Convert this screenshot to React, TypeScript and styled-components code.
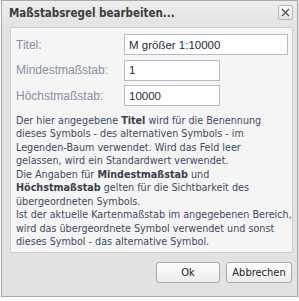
import styled, { createGlobalStyle } from 'styled-components'

const GlobalStyle = createGlobalStyle`
  html, body {
    margin: 0;
    padding: 0;
    background: #ffffff;
  }
`

const Window = styled.div`
  box-sizing: border-box;
  width: 297px;
  height: 297px;
  margin: 0 0 0 1px;
  border: 1px solid #a9a9a9;
  background: #e2e2e2;
  box-shadow: 1px 1px 2px rgba(0, 0, 0, 0.2);
  display: flex;
  flex-direction: column;
  font-family: 'DejaVu Sans Condensed', 'DejaVu Sans', sans-serif;
`

const TitleBar = styled.div`
  height: 24px;
  display: flex;
  align-items: center;
  justify-content: space-between;
  padding: 0 4px 0 7px;
  background: linear-gradient(#ededed, #e4e4e4);
`

const Title = styled.span`
  font-size: 11.5px;
  font-weight: bold;
  color: #3c3c3c;
  margin-top: -1px;
`

const CloseButton = styled.button`
  box-sizing: border-box;
  width: 15px;
  height: 15px;
  padding: 0;
  margin-top: -1px;
  border: 1px solid #b4b4b4;
  border-radius: 2px;
  background: linear-gradient(#fbfbfb, #e6e6e6);
  display: flex;
  align-items: center;
  justify-content: center;
`

const Body = styled.div`
  flex: 1;
  display: flex;
  flex-direction: column;
  padding: 2px 4px 0 8px;
`

const Panel = styled.div`
  box-sizing: border-box;
  height: 226px;
  border: 1px solid #d0d0d0;
  background: #f5f5f5;
  padding: 4px 4px 0 5px;
`

const FieldRow = styled.div`
  display: flex;
  align-items: center;
  height: 25.5px;
`

const Label = styled.label`
  width: 108px;
  font-family: 'Liberation Sans', Arial, sans-serif;
  font-size: 12px;
  color: #8790a6;
`

const Input = styled.input<{ $wide?: boolean }>`
  box-sizing: border-box;
  width: ${(p) => (p.$wide ? '164px' : '96px')};
  height: 21px;
  border: 1px solid #b9bcc8;
  background: #ffffff;
  padding: 0 4px;
  font-family: 'Liberation Sans', Arial, sans-serif;
  font-size: 11.5px;
  color: #2a2a3a;
  outline: none;
`

const Help = styled.p`
  margin: 5px 0 0;
  font-size: 10.7px;
  line-height: 13.5px;
  color: #3e4a64;
  white-space: nowrap;

  b {
    color: #3a3f50;
  }
`

const Footer = styled.div`
  display: flex;
  justify-content: flex-end;
  gap: 6px;
  padding: 9px 1px 0 0;
`

const Button = styled.button<{ $w: number }>`
  box-sizing: border-box;
  width: ${(p) => p.$w}px;
  height: 21px;
  border: 1px solid #a8a8a8;
  border-radius: 3px;
  background: linear-gradient(#fdfdfd, #ececec);
  font-family: 'DejaVu Sans Condensed', 'DejaVu Sans', sans-serif;
  font-size: 11px;
  color: #222;
  padding: 0;
`

export default function App() {
  return (
    <>
      <GlobalStyle />
      <Window>
        <TitleBar>
          <Title>Maßstabsregel bearbeiten...</Title>
          <CloseButton aria-label="Schließen">
            <svg width="9" height="9" viewBox="0 0 9 9">
              <path d="M1 1 L8 8 M8 1 L1 8" stroke="#505050" strokeWidth="1.3" />
            </svg>
          </CloseButton>
        </TitleBar>
        <Body>
          <Panel>
            <FieldRow>
              <Label>Titel:</Label>
              <Input $wide defaultValue="M größer 1:10000" />
            </FieldRow>
            <FieldRow>
              <Label>Mindestmaßstab:</Label>
              <Input defaultValue="1" />
            </FieldRow>
            <FieldRow>
              <Label>Höchstmaßstab:</Label>
              <Input defaultValue="10000" />
            </FieldRow>
            <Help>
              Der hier angegebene <b>Titel</b> wird für die Benennung
              <br />
              dieses Symbols - des alternativen Symbols - im
              <br />
              Legenden-Baum verwendet. Wird das Feld leer
              <br />
              gelassen, wird ein Standardwert verwendet.
              <br />
              Die Angaben für <b>Mindestmaßstab</b> und
              <br />
              <b>Höchstmaßstab</b> gelten für die Sichtbarkeit des
              <br />
              übergeordneten Symbols.
              <br />
              Ist der aktuelle Kartenmaßstab im angegebenen Bereich,
              <br />
              wird das übergeordnete Symbol verwendet und sonst
              <br />
              dieses Symbol - das alternative Symbol.
            </Help>
          </Panel>
          <Footer>
            <Button $w={64}>Ok</Button>
            <Button $w={66}>Abbrechen</Button>
          </Footer>
        </Body>
      </Window>
    </>
  )
}
